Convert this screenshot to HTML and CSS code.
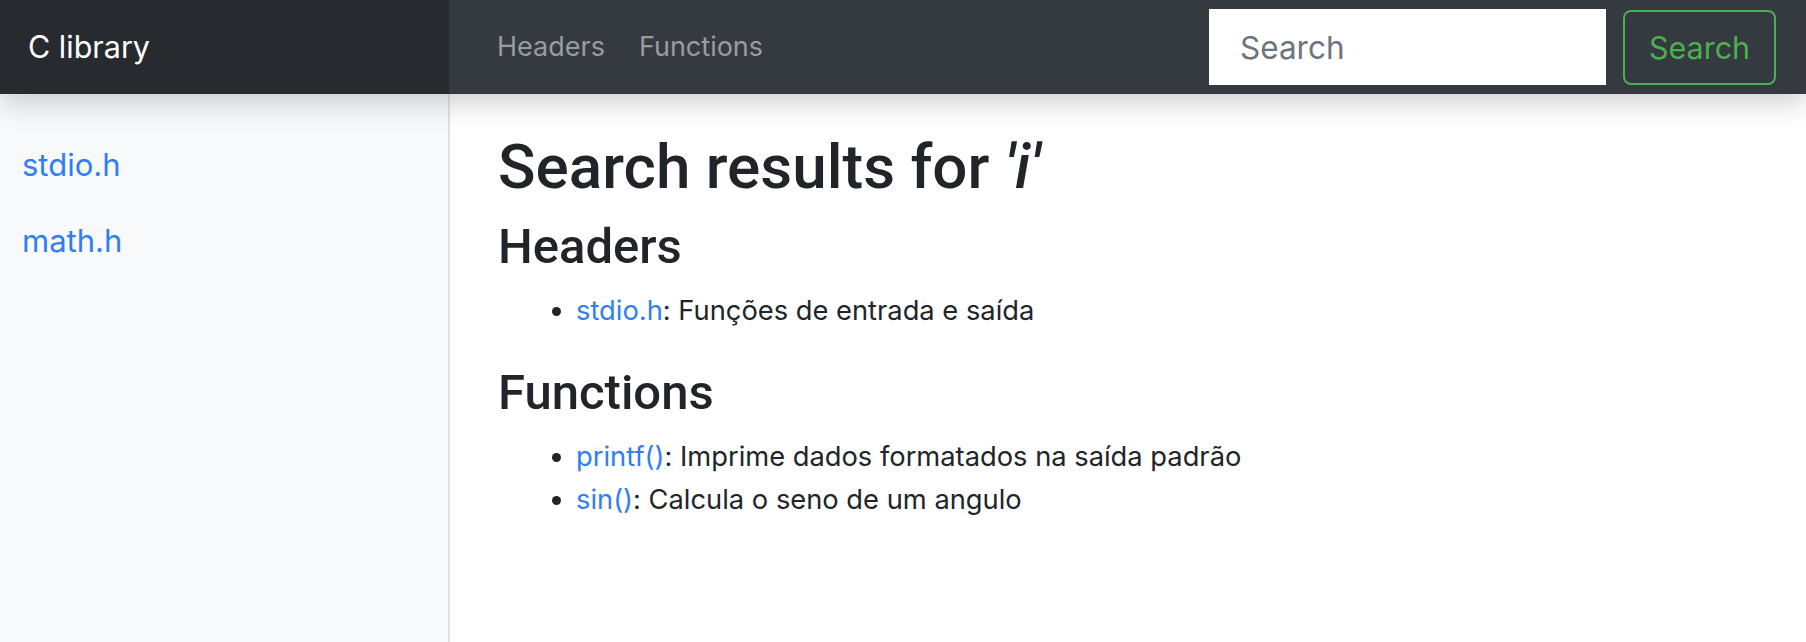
FILE: index.html
```html
<!DOCTYPE html>
<html lang="pt">
<head>
<meta charset="utf-8">
<title>C library</title>
<link rel="stylesheet" href="styles.css">
</head>
<body>
<header class="navbar">
  <a class="brand" href="#">C library</a>
  <nav class="nav">
    <a class="nav-link" href="#">Headers</a>
    <a class="nav-link" href="#">Functions</a>
  </nav>
  <form class="search">
    <input class="search-input" type="text" placeholder="Search">
    <button class="search-btn" type="button">Search</button>
  </form>
</header>
<div class="layout">
  <aside class="sidebar">
    <a class="side-link" href="#">stdio.h</a>
    <a class="side-link" href="#">math.h</a>
  </aside>
  <main class="content">
    <h1 class="title">Search results for <em>'i'</em></h1>
    <h2 class="section">Headers</h2>
    <ul class="results">
      <li><a href="#">stdio.h</a>: Funções de entrada e saída</li>
    </ul>
    <h2 class="section">Functions</h2>
    <ul class="results">
      <li><a href="#">printf()</a>: Imprime dados formatados na saída padrão</li>
      <li><a href="#">sin()</a>: Calcula o seno de um angulo</li>
    </ul>
  </main>
</div>
</body>
</html>
```

FILE: styles.css
```css
html, body {
  margin: 0;
  padding: 0;
  height: 100%;
}
body {
  font-family: "Inter", "Liberation Sans", sans-serif;
  color: #212529;
  background: #fff;
  font-size: 27.3px;
  line-height: 1.5;
}
a {
  color: #2f7ef6;
  text-decoration: none;
}
.navbar {
  position: relative;
  z-index: 2;
  display: flex;
  align-items: stretch;
  height: 94px;
  background: #343a40;
  box-shadow: 0 8px 28px rgba(0, 0, 0, 0.2);
}
.brand {
  width: 449px;
  box-sizing: border-box;
  padding-left: 28px;
  display: flex;
  align-items: center;
  background: rgba(0, 0, 0, 0.25);
  color: #fff;
  font-size: 30.5px;
}
.nav {
  display: flex;
  align-items: center;
  gap: 34px;
  padding-left: 48px;
}
.nav-link {
  color: rgba(255, 255, 255, 0.5);
  font-size: 27px;
}
.search {
  margin: 0 30px 0 auto;
  display: flex;
  align-items: center;
  gap: 17px;
}
.search-input {
  width: 397px;
  height: 76px;
  box-sizing: border-box;
  border: none;
  border-radius: 0;
  padding: 0 31px;
  font-family: inherit;
  font-size: 31.5px;
  color: #495057;
  background: #fff;
  outline: none;
}
.search-input::placeholder {
  color: #6c757d;
}
.search-btn {
  width: 153px;
  height: 75px;
  box-sizing: border-box;
  border: 2px solid #4caf50;
  border-radius: 8px;
  background: transparent;
  color: #4caf50;
  font-family: inherit;
  font-size: 30.5px;
  padding: 0;
}
.layout {
  display: flex;
  min-height: calc(100vh - 94px);
}
.sidebar {
  width: 450px;
  flex: none;
  box-sizing: border-box;
  background: #f8f9fa;
  border-right: 2px solid #e1e2e4;
  padding-top: 33px;
}
.side-link {
  display: block;
  font-size: 31px;
  line-height: 44px;
  padding: 16px 22px;
}
.content {
  flex: 1;
  padding: 0 48px;
}
.title,
.section {
  font-family: "Roboto", "Inter", sans-serif;
  font-weight: 500;
  line-height: 1.2;
}
.title {
  font-size: 62px;
  margin: 35.6px 0 14px;
}
.title em {
  font-style: italic;
}
.section {
  font-size: 49px;
  margin: 0 0 12.6px;
}
.results {
  margin: 0 0 31px;
  padding-left: 78px;
}
.results li {
  line-height: 43.3px;
}
```
